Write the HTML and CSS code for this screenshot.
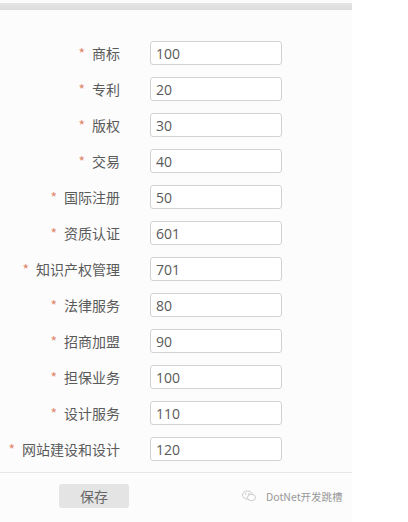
FILE: index.html
```html
<!DOCTYPE html>
<html lang="zh-CN">
<head>
    <meta charset="UTF-8">
    <title>费用设置</title>
    <link rel="stylesheet" href="styles.css">
</head>
<body>
    <div class="page">
        <div class="top-bar"></div>

        <form class="fee-form">
            <div class="row"><label><span class="req">*</span>商标</label><input type="text" value="100"></div>
            <div class="row"><label><span class="req">*</span>专利</label><input type="text" value="20"></div>
            <div class="row"><label><span class="req">*</span>版权</label><input type="text" value="30"></div>
            <div class="row"><label><span class="req">*</span>交易</label><input type="text" value="40"></div>
            <div class="row"><label><span class="req">*</span>国际注册</label><input type="text" value="50"></div>
            <div class="row"><label><span class="req">*</span>资质认证</label><input type="text" value="601"></div>
            <div class="row"><label><span class="req">*</span>知识产权管理</label><input type="text" value="701"></div>
            <div class="row"><label><span class="req">*</span>法律服务</label><input type="text" value="80"></div>
            <div class="row"><label><span class="req">*</span>招商加盟</label><input type="text" value="90"></div>
            <div class="row"><label><span class="req">*</span>担保业务</label><input type="text" value="100"></div>
            <div class="row"><label><span class="req">*</span>设计服务</label><input type="text" value="110"></div>
            <div class="row"><label><span class="req">*</span>网站建设和设计</label><input type="text" value="120"></div>
        </form>

        <div class="footer">
            <button type="button" class="save-btn">保存</button>
            <div class="mark">
                <svg width="14" height="12" viewBox="0 0 14 12">
                    <ellipse cx="5.5" cy="5" rx="5" ry="4" fill="none" stroke="#c8c8c8" stroke-width="1"/>
                    <ellipse cx="9.5" cy="7.5" rx="4" ry="3.2" fill="#fff" stroke="#c8c8c8" stroke-width="1"/>
                    <circle cx="3.8" cy="3.8" r="0.7" fill="#bbb"/>
                    <circle cx="7" cy="3.8" r="0.7" fill="#bbb"/>
                </svg>
                <span>DotNet开发跳槽</span>
            </div>
        </div>
    </div>
</body>
</html>
```

FILE: styles.css
```css
body {
    margin: 0;
    background-color: #fff;
    font-family: "Noto Sans CJK SC", "Microsoft YaHei", sans-serif;
    color: #5a5a5a;
}

.page {
    width: 352px;
    min-height: 522px;
    background-color: #fcfcfc;
    padding-top: 3px;
    box-sizing: border-box;
}

.top-bar {
    height: 7px;
    background: linear-gradient(#e6e6e6, #dcdcdc);
}

.fee-form {
    padding-top: 31px;
}

.row {
    display: flex;
    align-items: center;
    height: 24px;
    margin-bottom: 12px;
}

.row label {
    width: 120px;
    margin-right: 30px;
    text-align: right;
    font-size: 14px;
    line-height: 24px;
    white-space: nowrap;
}

.req {
    color: #e0876e;
    margin-right: 7px;
}

.row input {
    width: 132px;
    height: 24px;
    box-sizing: border-box;
    padding: 0 5px;
    border: 1px solid #d2d2d2;
    border-radius: 3px;
    background-color: #fff;
    font-family: "Open Sans", "Noto Sans", sans-serif;
    font-size: 14px;
    color: #5a5a5a;
}

.footer {
    display: flex;
    align-items: center;
    margin-top: -1px;
    border-top: 1px solid #e6e6e6;
    padding: 11px 0 0 59px;
}

.save-btn {
    width: 70px;
    height: 24px;
    border: none;
    border-radius: 3px;
    background-color: #e4e4e4;
    color: #666;
    font-family: "Noto Sans CJK SC", sans-serif;
    font-size: 14px;
    padding: 0;
}

.mark {
    display: flex;
    align-items: center;
    margin-left: 113px;
    font-size: 10.5px;
    color: #999;
}

.mark svg {
    margin-right: 10px;
}
```
